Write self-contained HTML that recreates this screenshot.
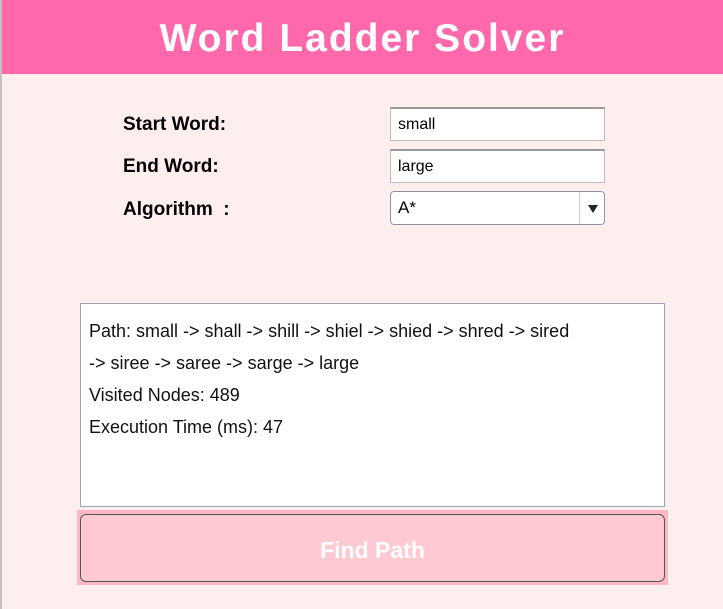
<!DOCTYPE html>
<html><head><style>
body{margin:0;width:723px;height:609px;background:#ffeeee;position:relative;overflow:hidden;font-family:"Liberation Sans",sans-serif}
.hd{position:absolute;left:2px;top:0;width:721px;height:74px;background:#ff69ab;color:#fff;font-weight:bold;font-size:39px;text-align:center;line-height:78px;letter-spacing:2px}
.edge{position:absolute;left:0;top:0;width:2px;height:609px;background:#c8c0c0}
.lb{position:absolute;left:123px;font-weight:bold;font-size:19px;color:#000}
.in{position:absolute;left:390px;width:215px;height:34px;background:#fff;border:1px solid #bbb;border-top:2px solid #999;box-sizing:border-box;font-size:16px;line-height:32px;padding-left:7px}
.sel{position:absolute;left:390px;top:191px;width:215px;height:34px;background:#fff;border:1px solid #8a96a6;border-radius:4px;box-sizing:border-box;font-size:17px;line-height:32px;padding-left:7px}
.sel:after{content:"";position:absolute;right:0;top:0;width:24px;height:32px;border-left:1px solid #ccc}
.tri{position:absolute;right:6px;top:13px;border-left:5px solid transparent;border-right:5px solid transparent;border-top:8px solid #222}
.box{position:absolute;left:80px;top:303px;width:585px;height:204px;background:#fff;border:1px solid #a0a4ac;box-sizing:border-box;padding:11px 8px;font-size:18px;line-height:32px;color:#111;white-space:nowrap}
.bo{position:absolute;left:77px;top:510px;width:591px;height:75px;background:#ffb6c6}
.bt{position:absolute;left:80px;top:514px;width:585px;height:68px;background:#ffc9d3;border:1px solid #555;border-radius:6px;box-sizing:border-box;color:#fff;font-weight:bold;font-size:23px;text-align:center;line-height:70px}
</style></head><body>
<div class="edge"></div>
<div class="hd">Word Ladder Solver</div>
<div class="lb" style="top:114px">Start Word:</div>
<div class="lb" style="top:156px">End Word:</div>
<div class="lb" style="top:199px">Algorithm&nbsp; :</div>
<div class="in" style="top:107px">small</div>
<div class="in" style="top:149px">large</div>
<div class="sel">A*<div class="tri"></div></div>
<div class="box">Path: small -&gt; shall -&gt; shill -&gt; shiel -&gt; shied -&gt; shred -&gt; sired<br>-&gt; siree -&gt; saree -&gt; sarge -&gt; large<br>Visited Nodes: 489<br>Execution Time (ms): 47</div>
<div class="bo"></div>
<div class="bt">Find Path</div>
</body></html>
